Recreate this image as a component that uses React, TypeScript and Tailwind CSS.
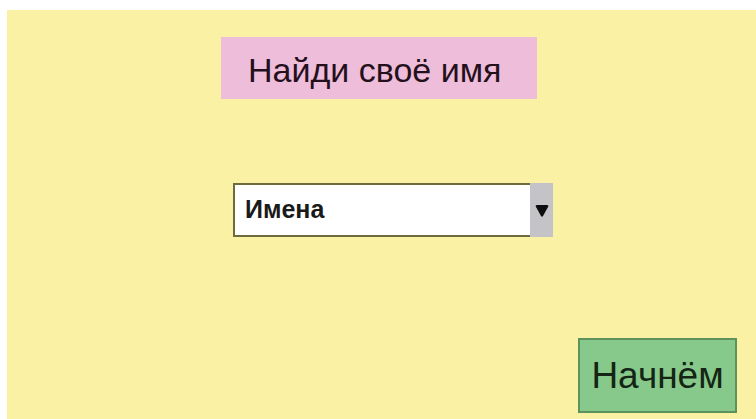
export default function App() {
  return (
    <div className="h-[419px] w-[756px] bg-white pl-[7px] pt-[10px]" style={{ fontFamily: '"Liberation Sans", Arial, sans-serif' }}>
      <div className="flex h-[409px] flex-col bg-[#fbf1a4]">
        {/* title */}
        <div className="ml-[214px] mt-[27px] flex h-[62px] w-[316px] items-center bg-[#edbdd9] pl-[27px] pt-[4px]">
          <span className="text-[34px] text-[#24101c]">Найди своё имя</span>
        </div>

        {/* names dropdown */}
        <div className="ml-[226px] mt-[84px] flex h-[54px] w-[320px] border-2 border-[#6e6b3c] bg-white">
          <div className="flex flex-1 items-center pl-[10px] text-[25px] font-bold text-[#1a1a1a]">Имена</div>
          <div className="-my-[2px] -mr-[2px] flex w-[23px] items-center justify-center bg-[#c4c4c8]">
            <svg width="14" height="16" viewBox="0 0 14 16">
              <path d="M2 3 Q0 3 1 5 L6 14 Q7 15.5 8 14 L13 5 Q14 3 12 3 Z" fill="#0d0d0d" />
            </svg>
          </div>
        </div>

        {/* start button */}
        <div className="ml-[571px] mt-[101px] flex h-[75px] w-[159px] items-center justify-center border-2 border-[#5d925d] bg-[#86c98a]">
          <span className="text-[37px] text-[#152515]">Начнём</span>
        </div>
      </div>
    </div>
  );
}
